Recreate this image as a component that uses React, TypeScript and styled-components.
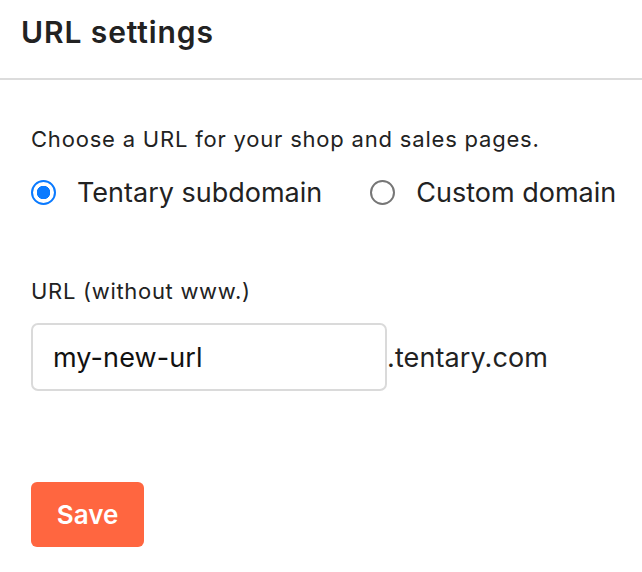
import React, { useState } from "react";
import styled, { createGlobalStyle } from "styled-components";

const GlobalStyle = createGlobalStyle`
  body {
    margin: 0;
    background: #ffffff;
    font-family: Inter, "Noto Sans", "Liberation Sans", sans-serif;
    color: #1f1f1f;
  }
`;

type Mode = "subdomain" | "custom";

export default function App() {
  const [mode, setMode] = useState<Mode>("subdomain");
  const [url, setUrl] = useState("my-new-url");

  return (
    <Layout>
      <GlobalStyle />
      <Header>
        <Title>URL settings</Title>
      </Header>
      <Body>
        <Prompt>Choose a URL for your shop and sales pages.</Prompt>
        <RadioGroup>
          <RadioOption onClick={() => setMode("subdomain")}>
            <RadioCircle $checked={mode === "subdomain"} />
            Tentary subdomain
          </RadioOption>
          <RadioOption onClick={() => setMode("custom")}>
            <RadioCircle $checked={mode === "custom"} />
            Custom domain
          </RadioOption>
        </RadioGroup>
        <FieldLabel>URL (without www.)</FieldLabel>
        <FieldRow>
          <UrlInput value={url} onChange={(e) => setUrl(e.target.value)} />
          <Suffix>.tentary.com</Suffix>
        </FieldRow>
        <SaveButton>Save</SaveButton>
      </Body>
    </Layout>
  );
}

const Layout = styled.div`
  width: 642px;
  height: 572px;
  overflow: hidden;
`;

const Header = styled.div`
  height: 80px;
  padding: 0 21px 14px 21px;
  display: flex;
  align-items: center;
  border-bottom: 2px solid #dcdcdc;
  box-sizing: border-box;
`;

const Title = styled.h2`
  margin: 0;
  font-size: 30px;
  line-height: 36px;
  font-weight: 600;
  letter-spacing: 0.9px;
  color: #222;
`;

const Body = styled.div`
  padding: 45px 0 0 31px;
  display: flex;
  flex-direction: column;
  align-items: flex-start;
`;

const Prompt = styled.p`
  margin: 0;
  font-size: 22px;
  line-height: 28px;
  letter-spacing: 0.8px;
  white-space: nowrap;
  color: #222;
`;

const RadioGroup = styled.div`
  margin-top: 24px;
  display: flex;
  align-items: center;
  gap: 48px;
`;

const RadioOption = styled.label`
  display: flex;
  align-items: center;
  flex-shrink: 0;
  gap: 21px;
  font-size: 27px;
  line-height: 32px;
  white-space: nowrap;
  color: #222;
  cursor: pointer;
`;

const RadioCircle = styled.span<{ $checked: boolean }>`
  width: 25px;
  height: 25px;
  margin-top: -2px;
  box-sizing: border-box;
  border-radius: 50%;
  border: ${({ $checked }) => ($checked ? "2.5px solid #0a7aff" : "2px solid #767676")};
  background: ${({ $checked }) =>
    $checked ? "radial-gradient(circle, #0a7aff 0 6.5px, #fff 7px)" : "#fff"};
  flex-shrink: 0;
`;

const FieldLabel = styled.div`
  margin-top: 68px;
  font-size: 22px;
  line-height: 28px;
  letter-spacing: 0.7px;
  white-space: nowrap;
  color: #222;
`;

const FieldRow = styled.div`
  margin-top: 18px;
  display: flex;
  align-items: center;
`;

const UrlInput = styled.input`
  width: 356px;
  height: 68px;
  box-sizing: border-box;
  border: 2px solid #dadada;
  border-radius: 7px;
  padding: 0 20px;
  font-family: inherit;
  font-size: 27px;
  letter-spacing: 0.1px;
  color: #111;
  outline: none;
`;

const Suffix = styled.span`
  font-size: 27px;
  letter-spacing: 0.1px;
  white-space: nowrap;
  color: #222;
`;

const SaveButton = styled.button`
  margin-top: 91px;
  width: 113px;
  height: 65px;
  border: none;
  border-radius: 6px;
  background: #ff6640;
  color: #fff;
  font-family: inherit;
  font-size: 26px;
  font-weight: 600;
  cursor: pointer;
`;
